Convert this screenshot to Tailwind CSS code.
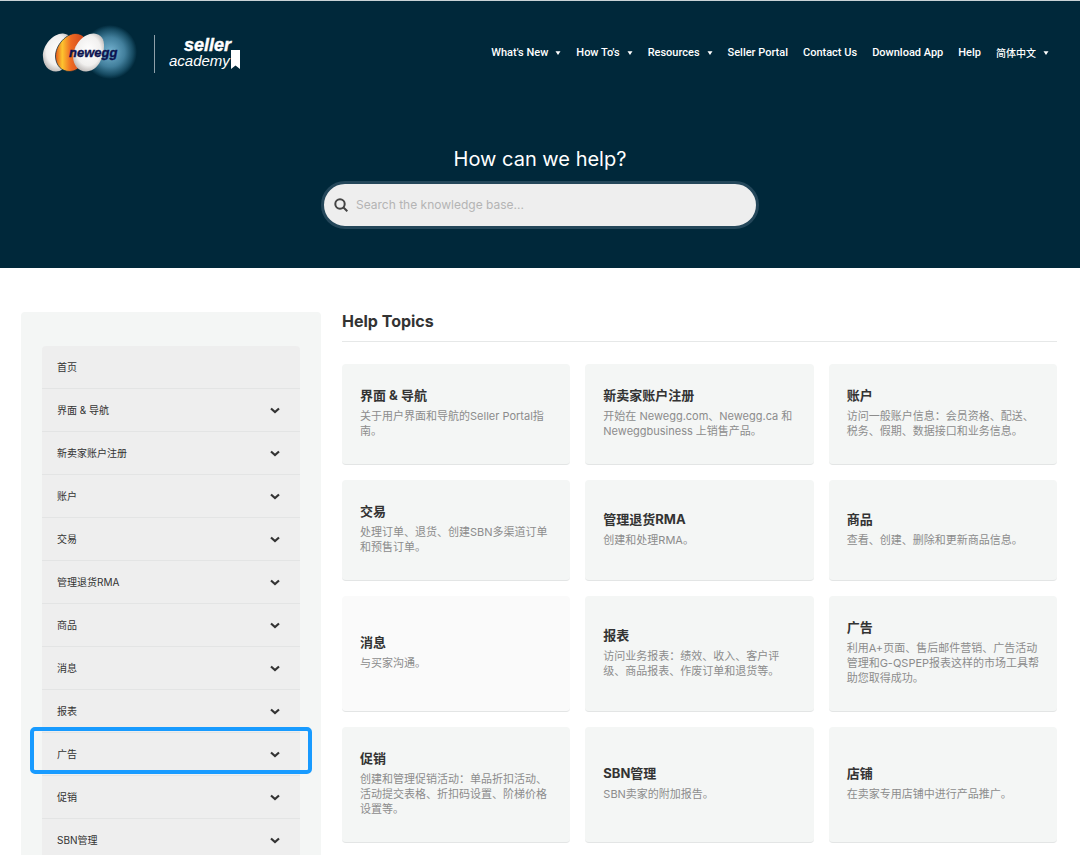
<!DOCTYPE html>
<html lang="zh-CN">
<head>
<meta charset="utf-8">
<meta name="viewport" content="width=device-width, initial-scale=1">
<title>Newegg Seller Academy</title>
<script src="https://cdn.jsdelivr.net/npm/@tailwindcss/browser@4"></script>
</head>
<body class="flex h-screen flex-col overflow-hidden bg-white font-['Inter','Noto_Sans_CJK_SC',sans-serif] text-[#333]">
<svg class="hidden" aria-hidden="true">
  <symbol id="chevron" viewBox="0 0 10 7"><path d="M1 1.5 L5 5 L9 1.5" fill="none" stroke="#333" stroke-width="2.2"/></symbol>
  <symbol id="caret" viewBox="0 0 6 4"><path d="M0.5 0.3h5L3 4z" fill="#fff"/></symbol>
</svg>

<header class="shrink-0 border-t border-[#c9d2d6] bg-[#00283a] pb-[39px] text-white">
  <div class="flex h-[104px] items-center justify-between pr-[31px] pl-[42px]">
    <a href="#" aria-label="Newegg Seller Academy" class="block">
      <svg width="200" height="56" viewBox="42 25 200 56" aria-hidden="true">
        <defs>
          <radialGradient id="glow"><stop offset="0" stop-color="#76b4d2"/><stop offset=".55" stop-color="#427f9c"/><stop offset=".85" stop-color="#164a61"/><stop offset="1" stop-color="#00283a"/></radialGradient>
          <radialGradient id="egg" cx=".5" cy=".45" r=".6"><stop offset="0" stop-color="#fff"/><stop offset=".65" stop-color="#f1f0ef"/><stop offset="1" stop-color="#b5b0ae"/></radialGradient>
          <linearGradient id="yolk" x1="0" x2="1"><stop offset="0" stop-color="#e2541d"/><stop offset=".22" stop-color="#fdc52f"/><stop offset=".5" stop-color="#ee6a22"/><stop offset="1" stop-color="#c9401c"/></linearGradient>
        </defs>
        <circle cx="110" cy="52" r="27" fill="url(#glow)"/>
        <path d="M43 57C42 45 54 33 63 33.500C70 34 73 39 72 47C71 60 66 71.500 56 71.500C48 71.500 43.500 65 43 57Z" fill="url(#egg)"/>
        <path d="M55.500 57C55 45 67 33 76 33.500C84 34 87 39 86 47C85 60 81 71 70 71.500C61 71.500 56 65 55.500 57Z" fill="url(#yolk)" stroke="#00283a" stroke-width=".7"/>
        <path d="M73 57C73 45 84 33 94 33.500C101 34 104.500 39 104 47C103 60 97 71 86 71.500C78 71.500 73.500 65 73 57Z" fill="url(#egg)"/>
        <text x="69" y="57" font-family="Liberation Sans, sans-serif" font-size="13" font-weight="700" font-style="italic" fill="#0c1350" stroke="#0c1350" stroke-width=".4">newegg</text>
        <path d="M154.500 35v38" stroke="#8fa0a9"/>
        <g fill="#fff" font-family="Liberation Sans, sans-serif" font-style="italic">
          <text x="184" y="51" font-size="18" font-weight="700" stroke="#fff" stroke-width=".4">seller</text>
          <text x="169" y="66" font-size="15">academy</text>
        </g>
        <path d="M231 50h9v19l-4.500-3.500L231 69z" fill="#fff"/>
      </svg>
    </a>
    <nav aria-label="Main" class="flex items-center gap-[15px] font-['Roboto','Noto_Sans_CJK_SC',sans-serif] text-[11px] font-medium whitespace-nowrap">
      <button class="flex items-center gap-[7px]">What's New<svg class="h-1 w-1.5"><use href="#caret"/></svg></button>
      <button class="flex items-center gap-[7px]">How To's<svg class="h-1 w-1.5"><use href="#caret"/></svg></button>
      <button class="flex items-center gap-[7px]">Resources<svg class="h-1 w-1.5"><use href="#caret"/></svg></button>
      <a href="#">Seller Portal</a>
      <a href="#">Contact Us</a>
      <a href="#">Download App</a>
      <a href="#">Help</a>
      <button class="flex items-center gap-[7px]"><span class="text-[10px]">简体中文</span><svg class="h-1 w-1.5"><use href="#caret"/></svg></button>
    </nav>
  </div>
  <form class="mx-auto mt-[42px] w-[438px] max-w-full">
    <h1 class="text-center text-[20px] leading-6"><label for="search">How can we help?</label></h1>
    <div class="mt-[10px] flex h-12 items-center gap-2 rounded-full border-[3px] border-[#24475a] bg-[#eee] px-[10px]">
      <svg class="size-[14px] shrink-0" viewBox="0 0 14 14" fill="none" stroke="#444" stroke-width="2"><circle cx="6" cy="6" r="4.700"/><path d="M9.500 9.500L13.300 13.300"/></svg>
      <input id="search" type="text" placeholder="Search the knowledge base..." class="min-w-0 flex-1 bg-transparent text-[12px] text-[#333] outline-none placeholder:text-[#b4b4b4]">
    </div>
  </form>
</header>

<div class="flex min-h-0 flex-1 items-start gap-[21px] pt-11 pr-[23px] pl-[21px]">
  <aside class="w-[300px] shrink-0 rounded-sm bg-[#f4f6f5] px-[21px] pt-[34px] pb-[35px]">
    <nav aria-label="Topics" class="rounded-sm bg-[#eee] text-[10px] text-[#333] *:flex *:h-[43px] *:w-full *:items-center *:justify-between *:border-b *:border-[#e3e4e4] *:pr-5 *:pl-[15px]">
      <a href="#">首页</a>
      <button>界面 &amp; 导航<svg class="h-[7px] w-2.5"><use href="#chevron"/></svg></button>
      <button>新卖家账户注册<svg class="h-[7px] w-2.5"><use href="#chevron"/></svg></button>
      <button>账户<svg class="h-[7px] w-2.5"><use href="#chevron"/></svg></button>
      <button>交易<svg class="h-[7px] w-2.5"><use href="#chevron"/></svg></button>
      <button>管理退货RMA<svg class="h-[7px] w-2.5"><use href="#chevron"/></svg></button>
      <button>商品<svg class="h-[7px] w-2.5"><use href="#chevron"/></svg></button>
      <button>消息<svg class="h-[7px] w-2.5"><use href="#chevron"/></svg></button>
      <button>报表<svg class="h-[7px] w-2.5"><use href="#chevron"/></svg></button>
      <button class="relative">广告<svg class="h-[7px] w-2.5"><use href="#chevron"/></svg><span class="absolute -inset-x-3 -top-[6px] bottom-[1px] rounded-[5px] border-4 border-[#189bff]"></span></button>
      <button>促销<svg class="h-[7px] w-2.5"><use href="#chevron"/></svg></button>
      <button>SBN管理<svg class="h-[7px] w-2.5"><use href="#chevron"/></svg></button>
    </nav>
  </aside>

  <main class="min-w-0 flex-1">
    <h2 class="border-b border-[#e6e8e8] pb-[11px] text-[16px] leading-[18px] font-bold">Help Topics</h2>
    <div class="mt-[22px] grid grid-cols-3 gap-[15px] text-[11px] leading-[15px] text-[#8c8c8c] *:flex *:flex-col *:justify-center *:gap-1 *:rounded-sm *:border-b *:border-[#e3e5e5] *:pt-[21px] *:pr-4 *:pb-[25px] *:pl-[18px]">
      <a href="#" class="bg-[#f4f6f5]"><h3 class="text-[13px] leading-5 font-bold text-[#333]">界面 &amp; 导航</h3><p>关于用户界面和导航的Seller Portal指南。</p></a>
      <a href="#" class="bg-[#f4f6f5]"><h3 class="text-[13px] leading-5 font-bold text-[#333]">新卖家账户注册</h3><p>开始在 Newegg.com、Newegg.ca 和 Neweggbusiness 上销售产品。</p></a>
      <a href="#" class="bg-[#f4f6f5]"><h3 class="text-[13px] leading-5 font-bold text-[#333]">账户</h3><p>访问一般账户信息：会员资格、配送、税务、假期、数据接口和业务信息。</p></a>
      <a href="#" class="bg-[#f4f6f5]"><h3 class="text-[13px] leading-5 font-bold text-[#333]">交易</h3><p>处理订单、退货、创建SBN多渠道订单和预售订单。</p></a>
      <a href="#" class="bg-[#f4f6f5]"><h3 class="text-[13px] leading-5 font-bold text-[#333]">管理退货RMA</h3><p>创建和处理RMA。</p></a>
      <a href="#" class="bg-[#f4f6f5]"><h3 class="text-[13px] leading-5 font-bold text-[#333]">商品</h3><p>查看、创建、删除和更新商品信息。</p></a>
      <a href="#" class="bg-[#fafafa]"><h3 class="text-[13px] leading-5 font-bold text-[#333]">消息</h3><p>与买家沟通。</p></a>
      <a href="#" class="bg-[#f4f6f5]"><h3 class="text-[13px] leading-5 font-bold text-[#333]">报表</h3><p>访问业务报表：绩效、收入、客户评级、商品报表、作废订单和退货等。</p></a>
      <a href="#" class="bg-[#f4f6f5]"><h3 class="text-[13px] leading-5 font-bold text-[#333]">广告</h3><p>利用A+页面、售后邮件营销、广告活动管理和G-QSPEP报表这样的市场工具帮助您取得成功。</p></a>
      <a href="#" class="bg-[#f4f6f5]"><h3 class="text-[13px] leading-5 font-bold text-[#333]">促销</h3><p>创建和管理促销活动：单品折扣活动、活动提交表格、折扣码设置、阶梯价格设置等。</p></a>
      <a href="#" class="bg-[#f4f6f5]"><h3 class="text-[13px] leading-5 font-bold text-[#333]">SBN管理</h3><p>SBN卖家的附加报告。</p></a>
      <a href="#" class="bg-[#f4f6f5]"><h3 class="text-[13px] leading-5 font-bold text-[#333]">店铺</h3><p>在卖家专用店铺中进行产品推广。</p></a>
    </div>
  </main>
</div>
</body>
</html>
